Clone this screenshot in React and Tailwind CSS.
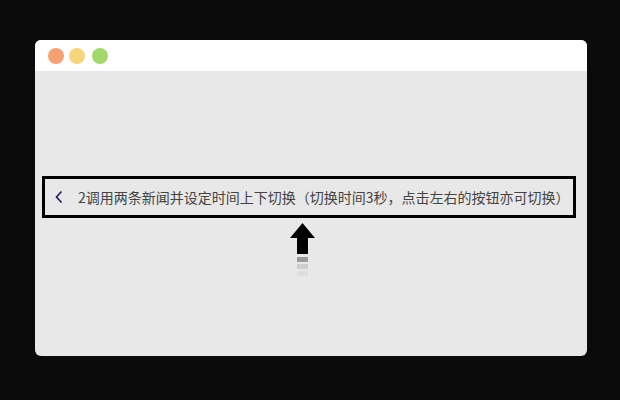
import React from 'react';

const App = () => {
    return (
        <div className="w-[620px] h-[400px] bg-[#0b0b0b] pt-[40px] pl-[35px]" style={{ fontFamily: '"Noto Sans CJK SC", "Noto Sans", sans-serif' }}>
            <div className="w-[552px] h-[316px] rounded-[6px] overflow-hidden bg-[#e8e8e8] flex flex-col">
                {/* title bar */}
                <div className="h-[31px] bg-white flex items-center gap-[5px] pl-[13px] shrink-0">
                    <span className="w-4 h-4 rounded-full bg-[#f5a272]" />
                    <span className="w-4 h-4 rounded-full bg-[#f7d67b]" />
                    <span className="w-4 h-4 rounded-full bg-[#a5d86b] ml-[2px]" />
                </div>

                <div className="flex flex-col pt-[105px] pl-[7px]">
                    {/* news ticker */}
                    <div className="w-[534px] h-[42px] border-[3px] border-black flex items-center">
                        <svg width="10" height="14" viewBox="0 0 10 14" className="ml-[9px]">
                            <path d="M7.5 1.5 L2.5 7 L7.5 12.5" stroke="#1e1a5a" strokeWidth="1.6" fill="none" />
                        </svg>
                        <span className="ml-[14px] text-[14px] text-[#444] whitespace-nowrap leading-none">
                            2调用两条新闻并设定时间上下切换（切换时间3秒，点击左右的按钮亦可切换）
                        </span>
                    </div>

                    {/* arrow */}
                    <div className="ml-[248px] mt-[5px] w-[25px] flex flex-col items-center">
                        <svg width="25" height="31" viewBox="0 0 25 31">
                            <path d="M12.5 0 L25 15 L18 15 L18 31 L7 31 L7 15 L0 15 Z" fill="#000" />
                        </svg>
                        <span className="w-[11px] h-[5px] bg-[#999] mt-[3px]" />
                        <span className="w-[11px] h-[5px] bg-[#cdcdcd] mt-[2px]" />
                        <span className="w-[11px] h-[5px] bg-[#dedede] mt-[2px]" />
                    </div>
                </div>
            </div>
        </div>
    );
};

export default App;
